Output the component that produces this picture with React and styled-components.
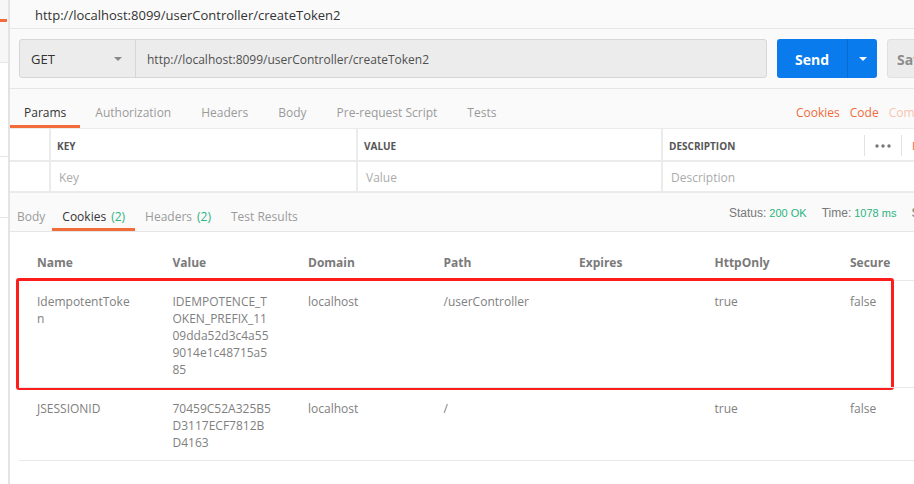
import React from 'react';
import styled, { createGlobalStyle } from 'styled-components';

const GlobalStyle = createGlobalStyle`
  html, body {
    margin: 0;
    padding: 0;
    background: #fff;
  }
  body {
    font-family: "Open Sans", "Liberation Sans", sans-serif;
  }
`;

const Window = styled.div`
  display: flex;
  width: 914px;
  height: 484px;
  overflow: hidden;
  background: #fff;
`;

const SideStrip = styled.div`
  flex: 0 0 8px;
  display: flex;
  flex-direction: column;
  border-right: 2px solid #e4e4e4;
`;

const StripBlock = styled.div`
  position: relative;
  flex: ${(p) => (p.$h ? `0 0 ${p.$h}px` : '1')};
  background: ${(p) => p.$bg || '#fff'};
  border-bottom: ${(p) => (p.$line ? '1px solid #e6e6e6' : 'none')};
  box-shadow: ${(p) => (p.$shadow ? '0 2px 2px rgba(0,0,0,0.06)' : 'none')};

  &::before {
    content: '';
    display: ${(p) => (p.$accent ? 'block' : 'none')};
    position: absolute;
    top: 19px;
    left: 0;
    right: 1px;
    height: 3px;
    background: #f26b3a;
  }
`;

const Main = styled.div`
  flex: 1;
  min-width: 0;
  display: flex;
  flex-direction: column;
  background: #fafafa;
  overflow: hidden;
`;

const TitleBar = styled.div`
  flex: 0 0 29px;
  display: flex;
  align-items: center;
  padding: 1px 0 0 25px;
  box-sizing: border-box;
  border-bottom: 1px solid #e6e6e6;
  font-size: 13px;
  color: #333;
  white-space: nowrap;
`;

const UrlBar = styled.div`
  flex: 0 0 60px;
  box-sizing: border-box;
  display: flex;
  gap: 10px;
  padding: 10px 0 10px 9px;
  border-bottom: 1px solid #e6e6e6;
`;

const RequestInput = styled.div`
  flex: 0 0 748px;
  box-sizing: border-box;
  display: flex;
  background: #ececec;
  border: 1px solid #d6d6d6;
  border-radius: 3px;
`;

const MethodSelect = styled.div`
  flex: 0 0 116px;
  box-sizing: border-box;
  display: flex;
  align-items: center;
  justify-content: space-between;
  padding: 1px 13px 0 11px;
  border-right: 1px solid #d6d6d6;
  font-size: 13px;
  color: #333;
`;

const UrlText = styled.div`
  flex: 1;
  display: flex;
  align-items: center;
  padding: 1px 0 0 11px;
  font-size: 12px;
  color: #505050;
  white-space: nowrap;
`;

const SendGroup = styled.div`
  flex: 0 0 100px;
  display: flex;
  background: #097bed;
  border-radius: 3px;
  color: #fff;
`;

const SendLabel = styled.div`
  flex: 0 0 70px;
  display: flex;
  align-items: center;
  justify-content: center;
  padding-top: 1px;
  font-size: 14px;
  font-weight: 700;
`;

const SendCaret = styled.div`
  flex: 1;
  display: flex;
  align-items: center;
  justify-content: center;
  border-left: 1px solid rgba(0, 0, 0, 0.12);
`;

const SaveButton = styled.div`
  flex: 0 0 80px;
  box-sizing: border-box;
  display: flex;
  align-items: center;
  padding: 1px 0 0 9px;
  background: #ececec;
  border: 1px solid #e0e0e0;
  border-radius: 3px;
  font-size: 14px;
  font-weight: 700;
  color: #8c8c8c;
`;

const TabRow = styled.div`
  flex: 0 0 ${(p) => p.$height}px;
  display: flex;
  align-items: stretch;
  border-bottom: ${(p) => (p.$line ? '1px solid #e6e6e6' : 'none')};
  white-space: nowrap;
`;

const Tab = styled.div`
  display: flex;
  align-items: center;
  padding: 11px ${(p) => p.$pad}px 0;
  border-bottom: 3px solid ${(p) => (p.$active ? '#f26b3a' : 'transparent')};
  font-size: 12px;
  color: ${(p) => (p.$active ? '#333' : '#9a9a9a')};
`;

const Count = styled.span`
  margin-left: 5px;
  color: #2bb47e;
`;

const RightLinks = styled.div`
  margin-left: auto;
  flex: 0 0 118px;
  min-width: 0;
  display: flex;
  align-items: center;
  gap: 10px;
  padding-top: 8px;
  font-size: 12px;
`;

const LinkText = styled.span`
  color: ${(p) => (p.$faded ? '#f9c5b0' : '#f26b3a')};
`;

const ParamsTable = styled.div`
  flex: 0 0 auto;
  display: grid;
  grid-template-columns: 39px 305px 303px 1fr;
  grid-template-rows: 31px 29px;
  gap: 2px;
  padding: 1px 0 2px;
  background: #ebebeb;
`;

const HeadCell = styled.div`
  display: flex;
  align-items: center;
  padding: 2px 0 0 6px;
  background: #fff;
  font-size: 10px;
  font-weight: 700;
  color: #555;
  text-transform: uppercase;
  white-space: nowrap;
`;

const HeadLabel = styled.span`
  flex: 0 0 195px;
`;

const BulkControls = styled.div`
  display: flex;
  align-items: center;
  height: 21px;
`;

const ControlDivider = styled.div`
  width: 1px;
  height: 21px;
  background: #e2e2e2;
`;

const DotsButton = styled.div`
  display: flex;
  align-items: center;
  padding: 0 10px;
`;

const BulkEdit = styled.span`
  padding-left: 10px;
  font-size: 11px;
  font-weight: 400;
  text-transform: none;
  color: #f26b3a;
`;

const InputCell = styled.div`
  display: flex;
  align-items: center;
  padding: 2px 0 0 8px;
  background: #fff;
  font-size: 12px;
  color: #ababab;
`;

const StatusGroup = styled.div`
  margin-left: auto;
  flex: 0 0 185px;
  min-width: 0;
  display: flex;
  align-items: center;
  padding-top: 1px;
  font-family: "Liberation Sans", Arial, sans-serif;
  font-size: 12px;
  color: #777;
  white-space: nowrap;
`;

const StatusItem = styled.span`
  margin-right: 15px;
`;

const StatusValue = styled.span`
  margin-left: 3px;
  font-size: 11px;
  color: #2bb47e;
`;

const CookieArea = styled.div`
  flex: 1;
  background: #fff;
  padding-left: 9px;
`;

const CookieRow = styled.div`
  position: relative;
  display: grid;
  grid-template-columns: repeat(7, 135.5px);
  padding: ${(p) => (p.$head ? '22px 0 9px' : '12px 0 9px')};
  border-top: ${(p) => (p.$head ? 'none' : '1px solid #e8e8e8')};
  border-bottom: ${(p) => (p.$last ? '1px solid #e8e8e8' : 'none')};
  font-size: 12px;
  line-height: 17px;
  font-weight: ${(p) => (p.$head ? 700 : 400)};
  color: ${(p) => (p.$head ? '#7a7a7a' : '#808080')};

  &::after {
    content: '';
    display: ${(p) => (p.$marked ? 'block' : 'none')};
    position: absolute;
    top: -3px;
    bottom: -3px;
    left: -3px;
    width: 878px;
    box-sizing: border-box;
    border: 3px solid #fe1d1d;
    border-radius: 3px;
  }
`;

const CookieCell = styled.div`
  padding: 0 18px 0 18px;
  word-break: break-all;
`;

const Caret = ({ color, size = 8 }) => (
  <svg width={size} height={size / 2} viewBox="0 0 8 4">
    <path d="M0 0 L8 0 L4 4 Z" fill={color} />
  </svg>
);

const Dots = () => (
  <svg width="16" height="4" viewBox="0 0 16 4">
    <circle cx="2" cy="2" r="1.7" fill="#777" />
    <circle cx="8" cy="2" r="1.7" fill="#777" />
    <circle cx="14" cy="2" r="1.7" fill="#777" />
  </svg>
);

const cookieColumns = ['Name', 'Value', 'Domain', 'Path', 'Expires', 'HttpOnly', 'Secure'];

const cookies = [
  {
    name: 'IdempotentToken',
    value: 'IDEMPOTENCE_TOKEN_PREFIX_1109dda52d3c4a559014e1c48715a585',
    domain: 'localhost',
    path: '/userController',
    expires: '',
    httpOnly: 'true',
    secure: 'false',
    marked: true,
  },
  {
    name: 'JSESSIONID',
    value: '70459C52A325B5D3117ECF7812BD4163',
    domain: 'localhost',
    path: '/',
    expires: '',
    httpOnly: 'true',
    secure: 'false',
  },
];

const requestTabs = ['Params', 'Authorization', 'Headers', 'Body', 'Pre-request Script', 'Tests'];

export default function App() {
  const url = 'http://localhost:8099/userController/createToken2';

  return (
    <>
      <GlobalStyle />
      <Window>
        <SideStrip>
          <StripBlock $h={62} $bg="#f7f7f7" $line $accent />
          <StripBlock $h={58} $shadow />
          <StripBlock $h={35} $line />
          <StripBlock $h={60} $line />
          <StripBlock />
        </SideStrip>

        <Main>
          <TitleBar>{url}</TitleBar>

          <UrlBar>
            <RequestInput>
              <MethodSelect>
                GET
                <Caret color="#888" />
              </MethodSelect>
              <UrlText>{url}</UrlText>
            </RequestInput>
            <SendGroup>
              <SendLabel>Send</SendLabel>
              <SendCaret>
                <Caret color="#fff" />
              </SendCaret>
            </SendGroup>
            <SaveButton>Save</SaveButton>
          </UrlBar>

          <TabRow $height={39}>
            {requestTabs.map((t, i) => (
              <Tab key={t} $pad={i === 0 ? 14 : 15} $active={i === 0}>
                {t}
              </Tab>
            ))}
            <RightLinks>
              <LinkText>Cookies</LinkText>
              <LinkText>Code</LinkText>
              <LinkText $faded>Comments (0)</LinkText>
            </RightLinks>
          </TabRow>

          <ParamsTable>
            <HeadCell />
            <HeadCell>Key</HeadCell>
            <HeadCell>Value</HeadCell>
            <HeadCell>
              <HeadLabel>Description</HeadLabel>
              <BulkControls>
                <ControlDivider />
                <DotsButton>
                  <Dots />
                </DotsButton>
                <ControlDivider />
                <BulkEdit>Bulk Edit</BulkEdit>
              </BulkControls>
            </HeadCell>
            <InputCell />
            <InputCell>Key</InputCell>
            <InputCell>Value</InputCell>
            <InputCell>Description</InputCell>
          </ParamsTable>

          <TabRow $height={38} $line>
            <Tab $pad={7}>Body</Tab>
            <Tab $pad={10} $active>
              Cookies<Count>(2)</Count>
            </Tab>
            <Tab $pad={10}>
              Headers<Count>(2)</Count>
            </Tab>
            <Tab $pad={10}>Test Results</Tab>
            <StatusGroup>
              <StatusItem>
                Status:<StatusValue>200 OK</StatusValue>
              </StatusItem>
              <StatusItem>
                Time:<StatusValue>1078 ms</StatusValue>
              </StatusItem>
              <StatusItem>Size: 236 B</StatusItem>
            </StatusGroup>
          </TabRow>

          <CookieArea>
            <CookieRow $head>
              {cookieColumns.map((c) => (
                <CookieCell key={c}>{c}</CookieCell>
              ))}
            </CookieRow>
            {cookies.map((c, i) => (
              <CookieRow key={c.name} $marked={c.marked} $last={i === cookies.length - 1}>
                <CookieCell>{c.name}</CookieCell>
                <CookieCell>{c.value}</CookieCell>
                <CookieCell>{c.domain}</CookieCell>
                <CookieCell>{c.path}</CookieCell>
                <CookieCell>{c.expires}</CookieCell>
                <CookieCell>{c.httpOnly}</CookieCell>
                <CookieCell>{c.secure}</CookieCell>
              </CookieRow>
            ))}
          </CookieArea>
        </Main>
      </Window>
    </>
  );
}
